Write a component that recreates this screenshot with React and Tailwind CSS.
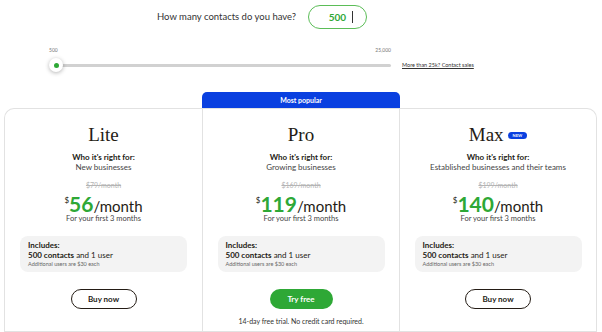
import React from "react";

const plans = [
    { name: "Lite", desc: "New businesses", was: "$79/month", price: "56", cta: "Buy now" },
    { name: "Pro", desc: "Growing businesses", was: "$169/month", price: "119", cta: "Try free", popular: true },
    { name: "Max", desc: "Established businesses and their teams", was: "$199/month", price: "140", cta: "Buy now", isNew: true },
];

function PlanCard({ plan, className }) {
    return (
        <div className={"flex flex-col items-center h-[224px] border border-[#e2e2e2] bg-white pt-[15px] " + className}>
            <div className="flex items-center gap-[4px]">
                <h2 className="font-['Liberation_Serif',serif] text-[19px] leading-[22px] text-[#241c15]">{plan.name}</h2>
                {plan.isNew &&
                    <span className="rounded-full bg-[#0a40e0] text-white text-[4px] font-bold leading-[7px] px-[5px]">NEW</span>
                }
            </div>
            <p className="mt-[6px] text-[8px] leading-[10px] font-bold text-[#241c15]">Who it's right for:</p>
            <p className="text-[8px] leading-[10px] text-[#444]">{plan.desc}</p>
            <p className="mt-[8px] text-[7px] leading-[10px] text-[#b5b5b5] line-through">{plan.was}</p>
            <div className="mt-[3px] h-[21px] leading-[21px] text-[#241c15] flex items-baseline">
                <span className="self-start text-[8px] leading-[10px] mt-[2px]">$</span>
                <span className="text-[21px] font-bold text-[#2ea836]">{plan.price}</span>
                <span className="text-[15px]">/month</span>
            </div>
            <p className="text-[7.5px] leading-[9px] text-[#444]">For your first 3 months</p>
            <div className="mt-[13px] w-[167px] rounded-[8px] bg-[#f3f3f3] px-[8px] pt-[5px] pb-[4px] text-[#241c15]">
                <p className="text-[8px] leading-[9px] font-bold">Includes:</p>
                <p className="text-[8px] leading-[10px]"><span className="font-bold">500 contacts</span> and 1 user</p>
                <p className="text-[5.5px] leading-[8px] text-[#666]">Additional users are $30 each</p>
            </div>
            {plan.popular ?
                <button className="mt-[17px] w-[63px] h-[20px] rounded-full bg-[#2ea836] text-white text-[8px] font-bold">{plan.cta}</button>
                :
                <button className="mt-[17px] w-[66px] h-[20px] rounded-full border-[1.5px] border-[#241c15] text-[#241c15] text-[8px] font-bold">{plan.cta}</button>
            }
            {plan.popular &&
                <p className="mt-[8px] text-[7px] leading-[8px] text-[#333]">14-day free trial. No credit card required.</p>
            }
        </div>
    );
}

export default function App() {
    return (
        <div className="w-[602px] h-[332px] overflow-hidden bg-white font-['Lato',sans-serif]">
            <div className="flex items-center pt-[5px] pl-[157px] gap-[12px]">
                <span className="text-[9.5px] text-[#333]">How many contacts do you have?</span>
                <div className="w-[59px] h-[24px] rounded-full border border-[#5bbd57] flex items-center justify-end pr-[13px] gap-[6px]">
                    <span className="text-[10px] font-bold text-[#2ea836]">500</span>
                    <span className="w-px h-[12px] bg-[#333]" />
                </div>
            </div>

            <div className="ml-[49px] mt-[18px] w-[342px] flex justify-between text-[5px] leading-[6px] text-[#777]">
                <span>500</span>
                <span>25,000</span>
            </div>
            <div className="ml-[49px] mt-[5px] flex items-center">
                <div className="relative w-[342px] h-[14px] flex items-center">
                    <div className="ml-[7px] h-[3px] flex-1 rounded-full bg-[#d1d1d1]" />
                    <div className="absolute left-0 top-0 w-[14px] h-[14px] rounded-full bg-white shadow-[0_1px_4px_rgba(0,0,0,0.3)] flex items-center justify-center">
                        <span className="w-[5px] h-[5px] rounded-full bg-[#2ea836]" />
                    </div>
                </div>
                <a className="ml-[11px] text-[5.5px] text-[#333] underline">More than 25k? Contact sales</a>
            </div>

            <div className="ml-[4px] mt-[20px] grid grid-cols-[198px_198px_197px]">
                <PlanCard plan={plans[0]} className="mt-[16px] rounded-tl-[10px] border-r-0" />
                <div className="flex flex-col">
                    <div className="h-[16px] rounded-t-[5px] bg-[#0a40e0] text-white text-[7px] font-bold flex items-center justify-center">Most popular</div>
                    <PlanCard plan={plans[1]} className="" />
                </div>
                <PlanCard plan={plans[2]} className="mt-[16px] rounded-tr-[10px] border-l-0" />
            </div>
        </div>
    );
}
